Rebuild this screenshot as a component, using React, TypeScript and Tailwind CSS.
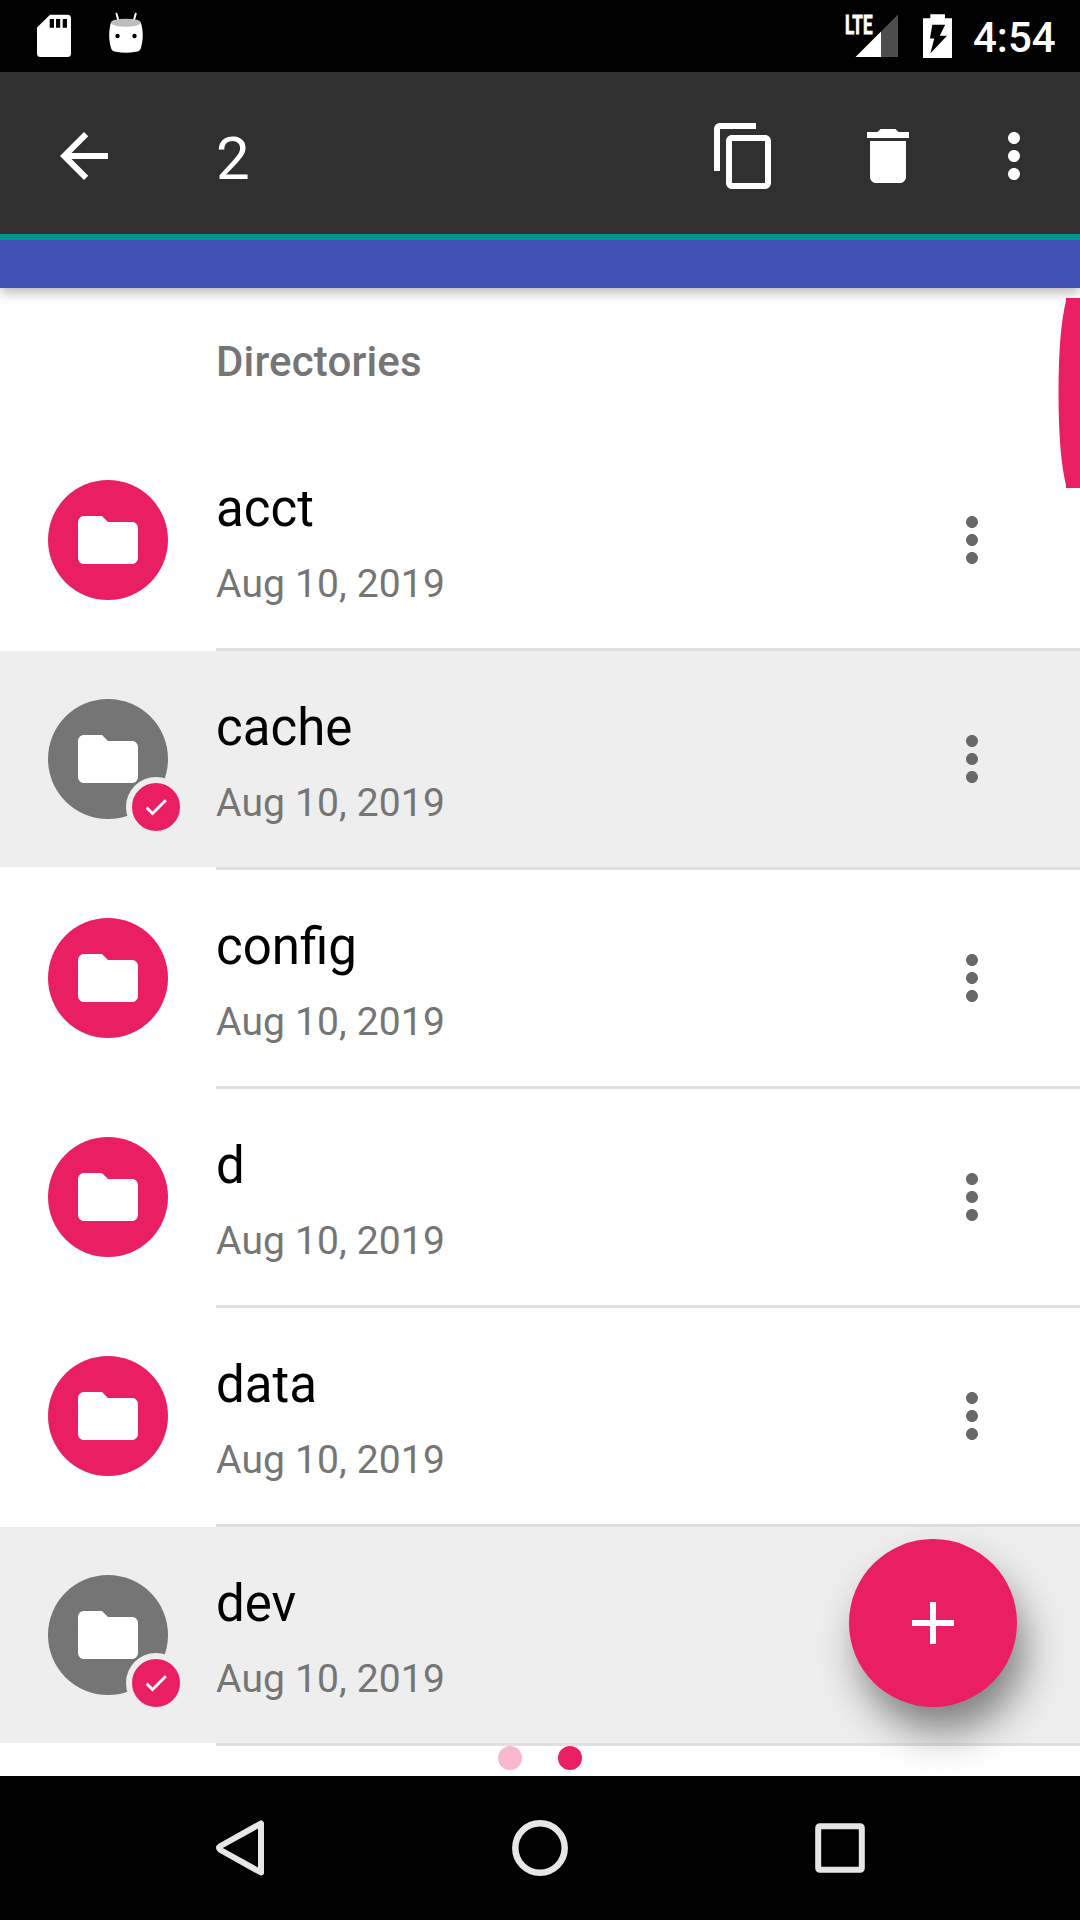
import React from "react";

type Entry = { name: string; date: string; selected?: boolean };

const entries: Entry[] = [
  { name: "acct", date: "Aug 10, 2019" },
  { name: "cache", date: "Aug 10, 2019", selected: true },
  { name: "config", date: "Aug 10, 2019" },
  { name: "d", date: "Aug 10, 2019" },
  { name: "data", date: "Aug 10, 2019" },
  { name: "dev", date: "Aug 10, 2019", selected: true },
];

function Icon({ d, className = "" }: { d: string; className?: string }) {
  return (
    <svg viewBox="0 0 24 24" fill="currentColor" className={`size-[72px] shrink-0 ${className}`}>
      <path d={d} />
    </svg>
  );
}

const BACK = "M20 11H7.83l5.59-5.59L12 4l-8 8 8 8 1.41-1.41L7.83 13H20v-2z";
const COPY =
  "M16 1H4c-1.1 0-2 .9-2 2v14h2V3h12V1zm3 4H8c-1.1 0-2 .9-2 2v14c0 1.1.9 2 2 2h11c1.1 0 2-.9 2-2V7c0-1.1-.9-2-2-2zm0 16H8V7h11v14z";
const TRASH = "M6 19c0 1.1.9 2 2 2h8c1.1 0 2-.9 2-2V7H6v12zM19 4h-3.500l-1-1h-5l-1 1H5v2h14V4z";
const MORE =
  "M12 8c1.1 0 2-.9 2-2s-.9-2-2-2-2 .9-2 2 .9 2 2 2zm0 2c-1.1 0-2 .9-2 2s.9 2 2 2 2-.9 2-2-.9-2-2-2zm0 6c-1.1 0-2 .9-2 2s.9 2 2 2 2-.9 2-2-.9-2-2-2z";
const FOLDER = "M10 4H4c-1.1 0-1.990.9-1.990 2L2 18c0 1.1.9 2 2 2h16c1.1 0 2-.9 2-2V8c0-1.1-.9-2-2-2h-8l-2-2z";
const CHECK = "M9 16.170L4.830 12l-1.420 1.410L9 19 21 7l-1.410-1.410z";
const PLUS = "M19 13h-6v6h-2v-6H5v-2h6V5h2v6h6v2z";

function StatusBar() {
  return (
    <header className="flex h-[72px] shrink-0 items-start justify-between bg-black pl-9 pr-6 text-white">
      <div className="flex gap-9">
        <svg viewBox="0 0 36 72" className="h-[72px] w-9">
          <path
            fill="#fff"
            fillRule="evenodd"
            d="M14 14.700H31.500Q35 14.700 35 18.200V53.500Q35 57 31.500 57H4.500Q1 57 1 53.500V27.500ZM13.700 19H18V27.700H13.700ZM20 19H24.200V27.700H20ZM26.700 19H31V27.700H26.700Z"
          />
        </svg>
        <svg viewBox="0 0 38 72" className="h-[72px] w-[38px]">
          <path stroke="#fff" strokeWidth="2" strokeLinecap="round" d="M8.500 13.700L10.500 21M27.700 13.700L25.700 21" />
          <path fill="#fff" d="M2.800 23C.6 31 .6 40 3.200 48.500C4 51 6 51.300 8 51.700Q18 53.700 28 51.700C30 51.300 32 51 32.800 48.500C35.400 40 35.400 31 33 23Z" />
          <ellipse cx="17.900" cy="22.700" rx="15" ry="4" fill="#bdbdbd" />
          <circle cx="9.500" cy="36" r="2.200" fill="#000" />
          <circle cx="26.500" cy="36" r="2.200" fill="#000" />
        </svg>
      </div>
      <div className="flex">
        <svg viewBox="0 0 56 72" className="h-[72px] w-14">
          <text
            x="1"
            y="33.500"
            fill="#fff"
            stroke="#fff"
            strokeWidth="0.800"
            fontFamily="Roboto, sans-serif"
            fontWeight="700"
            fontSize="25.500"
            textLength="27.500"
            lengthAdjust="spacingAndGlyphs"
          >
            LTE
          </text>
          <path fill="#4d4d4d" d="M37 31.500L54 14.500V57H37Z" />
          <path fill="#fff" d="M11.500 57L37 31.500V57Z" />
        </svg>
        <svg viewBox="0 0 30 72" className="ml-[22px] h-[72px] w-[30px]">
          <path
            fill="#fff"
            fillRule="evenodd"
            d="M8.300 14.200H23V18.200H30V58H1V18.200H8.300ZM10.300 24.700H23.200L17.700 35.700H25L8.300 53.500L12.300 38.500H8Z"
          />
        </svg>
        <span className="ml-[21px] w-[83px] whitespace-nowrap pt-[13px] text-[42px] font-medium leading-[49px]">4:54</span>
      </div>
    </header>
  );
}

function Toolbar() {
  return (
    <div className="relative z-10 flex h-[168px] shrink-0 items-center border-b-6 border-[#009688] bg-[#303030] pl-12 pr-[30px] pt-1.5 text-white">
      <Icon d={BACK} />
      <span className="ml-24 flex-1 pt-1.5 text-[60px] leading-[70px]">2</span>
      <Icon d={COPY} />
      <Icon d={TRASH} className="ml-[72px]" />
      <Icon d={MORE} className="ml-[54px]" />
    </div>
  );
}

function Row({ entry }: { entry: Entry }) {
  return (
    <li className="shrink-0">
      <div className={`flex h-[216px] items-center pl-12 pr-[72px] ${entry.selected ? "bg-[#eeeeee]" : "bg-white"}`}>
        <div
          className={`relative flex size-[120px] items-center justify-center rounded-full text-white ${
            entry.selected ? "bg-[#757575]" : "bg-[#e91e63]"
          }`}
        >
          <Icon d={FOLDER} />
          {entry.selected && (
            <span className="absolute -bottom-[18px] -right-[18px] flex size-[60px] items-center justify-center rounded-full border-6 border-[#eeeeee] bg-[#e91e63]">
              <svg viewBox="0 0 24 24" fill="currentColor" stroke="currentColor" strokeWidth="0.500" className="size-7">
                <path d={CHECK} />
              </svg>
            </span>
          )}
        </div>
        <div className="ml-12 flex flex-1 flex-col pt-1.5">
          <span className="text-[51px] leading-[60px] text-black">{entry.name}</span>
          <span className="mt-[22px] text-[39px] leading-[46px] tracking-[0.15px] text-[#757575]">{entry.date}</span>
        </div>
        <Icon d={MORE} className="text-[#686868]" />
      </div>
      <div className="ml-[216px] h-[3px] bg-[#e0e0e0]" />
    </li>
  );
}

function NavBar() {
  return (
    <nav className="flex h-36 shrink-0 items-center justify-center gap-[228px] bg-black">
      <svg viewBox="0 0 72 72" className="size-[72px]" fill="none" stroke="#e6e6e6" strokeWidth="6" strokeLinejoin="round">
        <path d="M57 11.500V60.500L16.500 38Q13.500 36 16.500 34Z" />
      </svg>
      <svg viewBox="0 0 72 72" className="size-[72px]" fill="none" stroke="#e6e6e6" strokeWidth="6.500">
        <circle cx="36" cy="36" r="24.700" />
      </svg>
      <svg viewBox="0 0 72 72" className="size-[72px]" fill="none" stroke="#e6e6e6" strokeWidth="6">
        <rect x="14.200" y="14.200" width="43.600" height="43.600" rx="1.500" />
      </svg>
    </nav>
  );
}

export default function App() {
  return (
    <div className="relative flex h-[1920px] w-[1080px] flex-col overflow-hidden bg-white font-['Roboto',sans-serif]">
      <StatusBar />
      <Toolbar />
      <div className="h-12 shrink-0 bg-[#3f51b5] shadow-[0_4px_12px_rgba(0,0,0,0.3)]" />
      <main className="flex flex-1 flex-col">
        <h2 className="h-36 shrink-0 pl-[216px] pt-[49px] text-[42px] font-medium leading-[49px] tracking-[0.15px] text-[#757575]">Directories</h2>
        <ul className="flex flex-col">
          {entries.map((entry) => (
            <Row key={entry.name} entry={entry} />
          ))}
        </ul>
        <div className="flex justify-center gap-9">
          <span className="size-6 rounded-full bg-[#f8b9cf]" />
          <span className="size-6 rounded-full bg-[#e91e63]" />
        </div>
      </main>
      <NavBar />
      <svg viewBox="0 0 24 190" className="absolute right-0 top-[298px] h-[190px] w-6" fill="#e91e63">
        <path d="M10 0H24V190H10V187Q2.500 157 2.500 95T10 3Z" />
      </svg>
      <button
        aria-label="Add"
        className="absolute left-[849px] top-[1539px] flex size-[168px] items-center justify-center rounded-full bg-[#e91e63] text-white shadow-[9px_26px_42px_-2px_rgba(0,0,0,0.48)]"
      >
        <Icon d={PLUS} />
      </button>
    </div>
  );
}
